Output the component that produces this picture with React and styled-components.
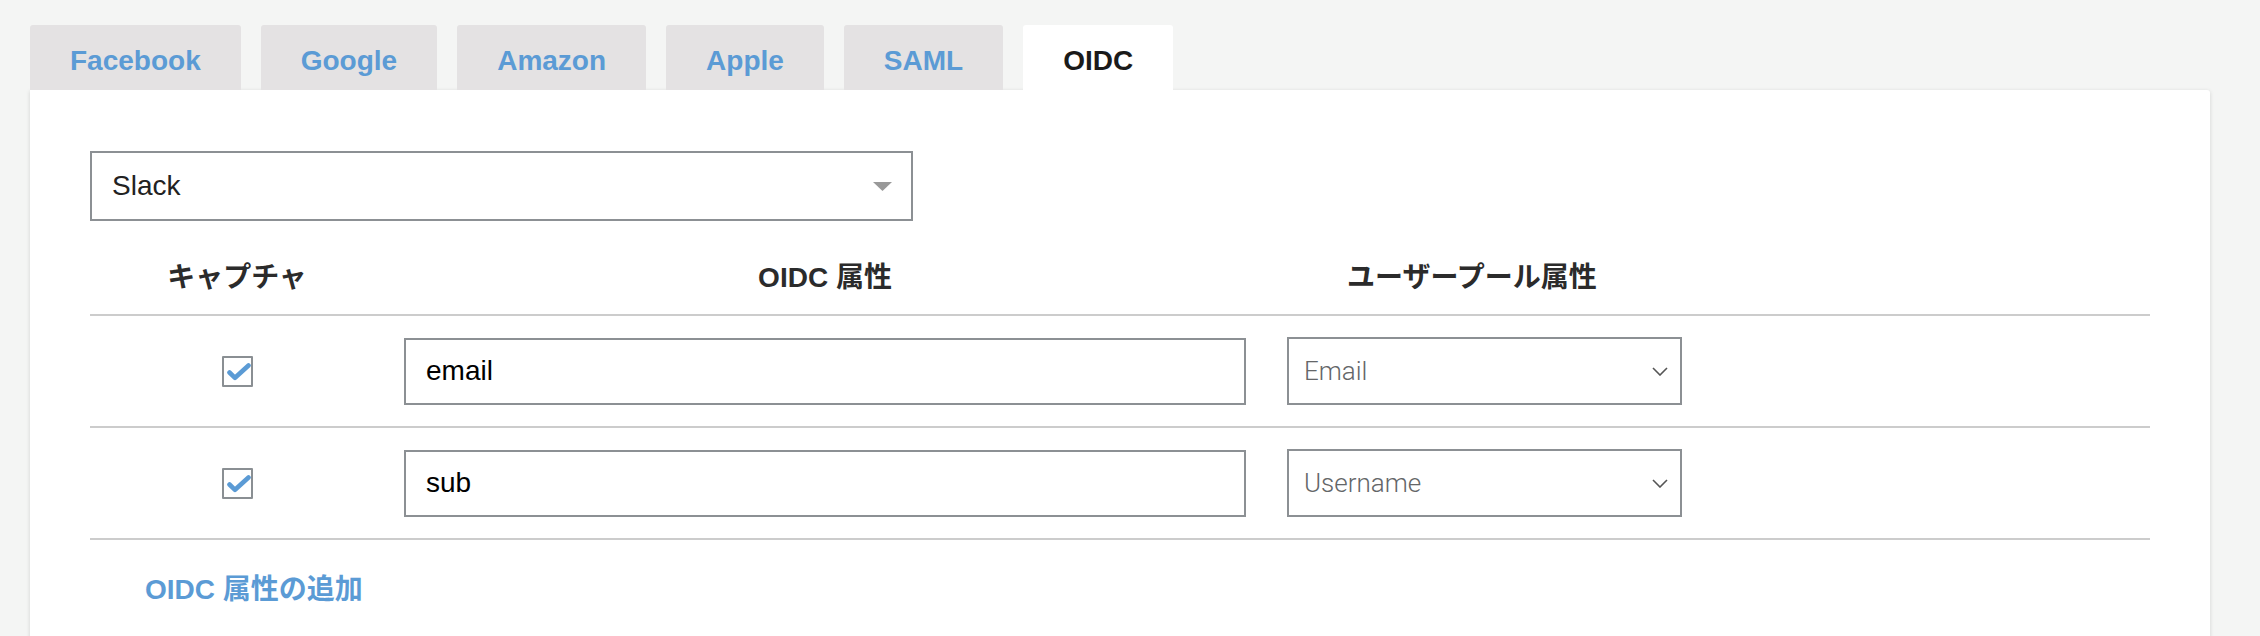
import React from "react";
import styled, { createGlobalStyle } from "styled-components";

const Global = createGlobalStyle`
  html, body {
    margin: 0;
    padding: 0;
    background: #f4f5f4;
  }
  body {
    font-family: "Liberation Sans", Arial, "Noto Sans CJK JP", sans-serif;
  }
  * { box-sizing: border-box; }
`;

const Page = styled.div`
  padding: 25px 50px 0 30px;
`;

const TabBar = styled.div`
  display: flex;
  gap: 20px;
`;

const Tab = styled.div`
  height: 65px;
  padding: 19px 40px 0;
  font: 700 28px/34px "Liberation Sans", Arial, sans-serif;
  border-radius: 3px 3px 0 0;
  background: ${(p) => (p.$active ? "#ffffff" : "#e4e2e3")};
  color: ${(p) => (p.$active ? "#1a1a1a" : "#5b9bd5")};
  cursor: pointer;
`;

const Panel = styled.div`
  background: #ffffff;
  box-shadow: 0 1px 4px rgba(0, 0, 0, 0.14);
  padding: 61px 60px 60px;
  border-radius: 0 3px 0 0;
`;

const ProviderSelect = styled.div`
  width: 823px;
  height: 70px;
  border: 2px solid #8c9094;
  display: flex;
  align-items: center;
  justify-content: space-between;
  padding: 0 19px 0 20px;
  font: 400 28px/34px "Liberation Sans", Arial, sans-serif;
  color: #222;
`;

const Row = styled.div`
  display: grid;
  grid-template-columns: 294px 882px 412px 1fr;
  align-items: center;
  border-bottom: 2px solid #cccccc;
`;

const HeaderRow = styled(Row)`
  padding: 40px 0 19px;
`;

const HeadCell = styled.div`
  text-align: center;
  font: 700 28px/34px "Liberation Sans", Arial, "Noto Sans CJK JP", sans-serif;
  color: #2b2b2b;
`;

const DataRow = styled(Row)`
  min-height: 112px;
`;

const CheckBox = styled.div`
  justify-self: center;
  width: 31px;
  height: 31px;
  border: 2px solid #8a8f93;
  border-radius: 1px;
  display: flex;
  background: #fff;
`;

const TextInput = styled.div`
  margin: 0 20px;
  height: 67px;
  border: 2px solid #8c9094;
  display: flex;
  align-items: center;
  padding: 0 20px;
  font: 400 28px/34px "Liberation Sans", Arial, sans-serif;
  color: #000;
`;

const AttrSelect = styled.div`
  margin-left: 21px;
  width: 395px;
  height: 68px;
  border: 2px solid #8c9094;
  display: flex;
  align-items: center;
  justify-content: space-between;
  padding: 0 12px 0 15px;
  font: 300 26px/32px Roboto, "Liberation Sans", sans-serif;
  color: #646668;
`;

const AddLink = styled.div`
  padding: 33px 0 0 55px;
  font: 700 28px/34px "Liberation Sans", Arial, "Noto Sans CJK JP", sans-serif;
  color: #5b9bd5;
  cursor: pointer;
`;

const Check = () => (
  <svg width="27" height="27" viewBox="0 0 27 27">
    <path
      d="M5.5 14.5 L11 19.8 L24.5 7.5"
      fill="none"
      stroke="#5b9bd5"
      strokeWidth="4.6"
      strokeLinecap="round"
      strokeLinejoin="round"
    />
  </svg>
);

const Triangle = () => (
  <svg width="19" height="9" viewBox="0 0 19 9">
    <path d="M0 0 H19 L9.5 9 Z" fill="#999" />
  </svg>
);

const Chevron = () => (
  <svg width="16" height="9" viewBox="0 0 16 9">
    <path d="M1 1 L8 8 L15 1" fill="none" stroke="#555" strokeWidth="1.6" />
  </svg>
);

const tabs = ["Facebook", "Google", "Amazon", "Apple", "SAML", "OIDC"];
const rows = [
  { oidc: "email", pool: "Email" },
  { oidc: "sub", pool: "Username" },
];

export default function App() {
  return (
    <>
      <Global />
      <Page>
        <TabBar>
          {tabs.map((t) => (
            <Tab key={t} $active={t === "OIDC"}>
              {t}
            </Tab>
          ))}
        </TabBar>
        <Panel>
          <ProviderSelect>
            <span>Slack</span>
            <Triangle />
          </ProviderSelect>
          <HeaderRow>
            <HeadCell>キャプチャ</HeadCell>
            <HeadCell>OIDC 属性</HeadCell>
            <HeadCell>ユーザープール属性</HeadCell>
            <div />
          </HeaderRow>
          {rows.map((r) => (
            <DataRow key={r.oidc}>
              <CheckBox>
                <Check />
              </CheckBox>
              <TextInput>{r.oidc}</TextInput>
              <AttrSelect>
                <span>{r.pool}</span>
                <Chevron />
              </AttrSelect>
              <div />
            </DataRow>
          ))}
          <AddLink>OIDC 属性の追加</AddLink>
        </Panel>
      </Page>
    </>
  );
}
